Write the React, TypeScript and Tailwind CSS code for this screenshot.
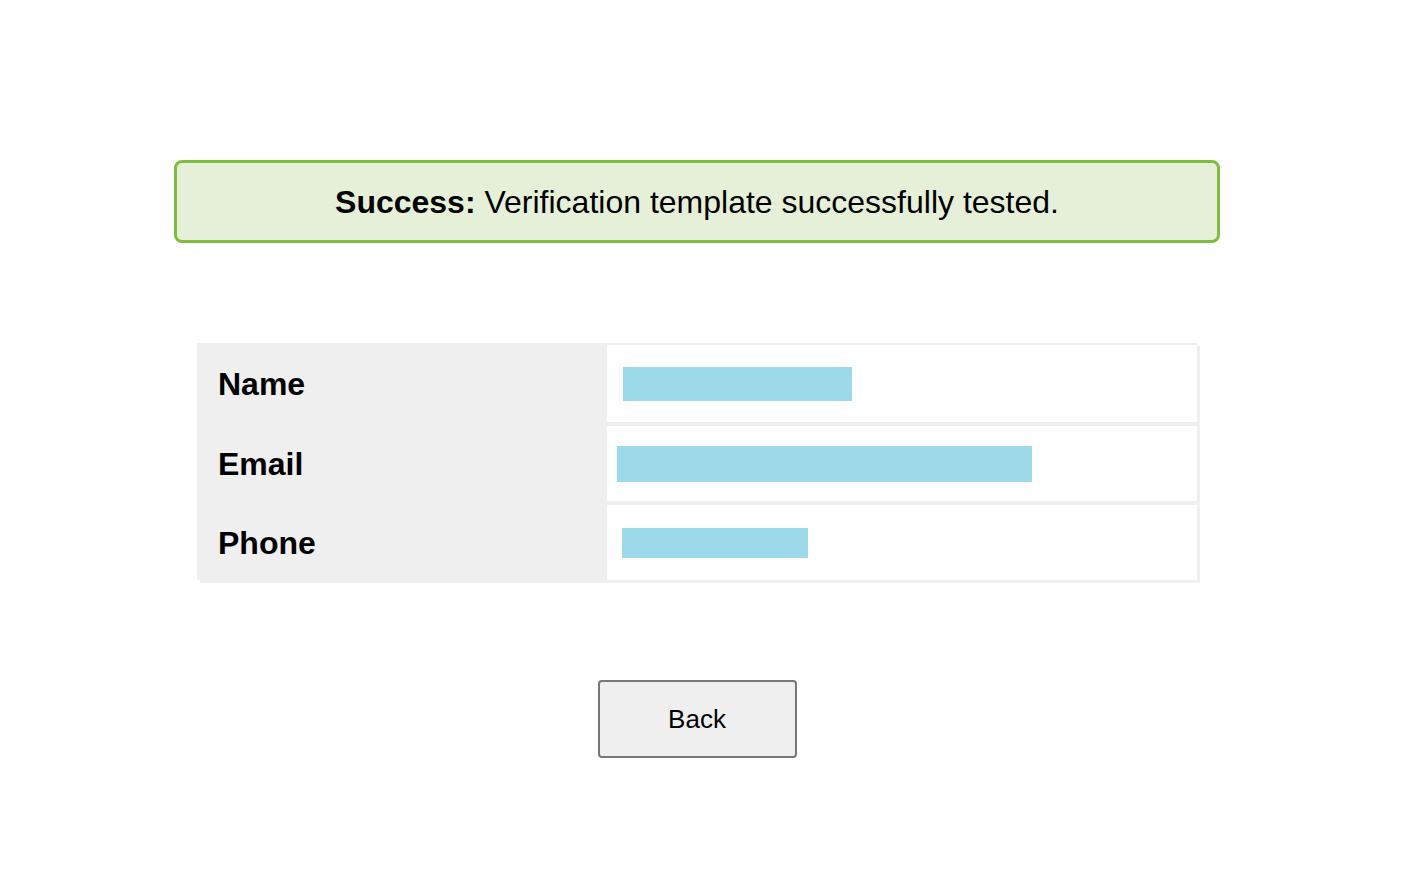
import React from "react";

const rows = [
  { label: "Name", h: "h-[77px]", bar: "ml-[16px] w-[229px] h-[34px]" },
  { label: "Email", h: "h-[75px]", bar: "ml-[10px] w-[415px] h-[36px]" },
  { label: "Phone", h: "h-[75px]", bar: "ml-[15px] w-[186px] h-[30px]" },
];

export default function App() {
  return (
    <div className="min-h-[892px] w-[1394px] bg-white pt-[160px] font-['Liberation_Sans',Arial,sans-serif] text-black">
      {/* success banner */}
      <div className="mx-auto flex h-[83px] w-[1046px] items-center justify-center rounded-[8px] border-[3px] border-[#80bd3e] bg-[#e6f0d9] text-[32px] leading-none">
        <p>
          <span className="font-bold">Success:</span> Verification template
          successfully tested.
        </p>
      </div>

      {/* details table */}
      <div className="mx-auto mt-[100px] flex w-[1000px] flex-col gap-[4px] bg-[#efefef] pt-[2px] shadow-[3px_3px_0_#efefef]">
        {rows.map((row) => (
          <div key={row.label} className={`flex ${row.h}`}>
            <div className="flex w-[410px] items-center pl-[21px] text-[32px] font-bold leading-none">
              {row.label}
            </div>
            <div className="flex flex-1 items-center bg-white">
              <div className={`${row.bar} bg-[#9cd9e9]`} />
            </div>
          </div>
        ))}
      </div>

      <div className="mt-[100px] flex justify-center">
        <button className="h-[78px] w-[199px] rounded-[4px] border-2 border-[#777777] bg-[#efefef] text-[26px] leading-none">
          Back
        </button>
      </div>
    </div>
  );
}
